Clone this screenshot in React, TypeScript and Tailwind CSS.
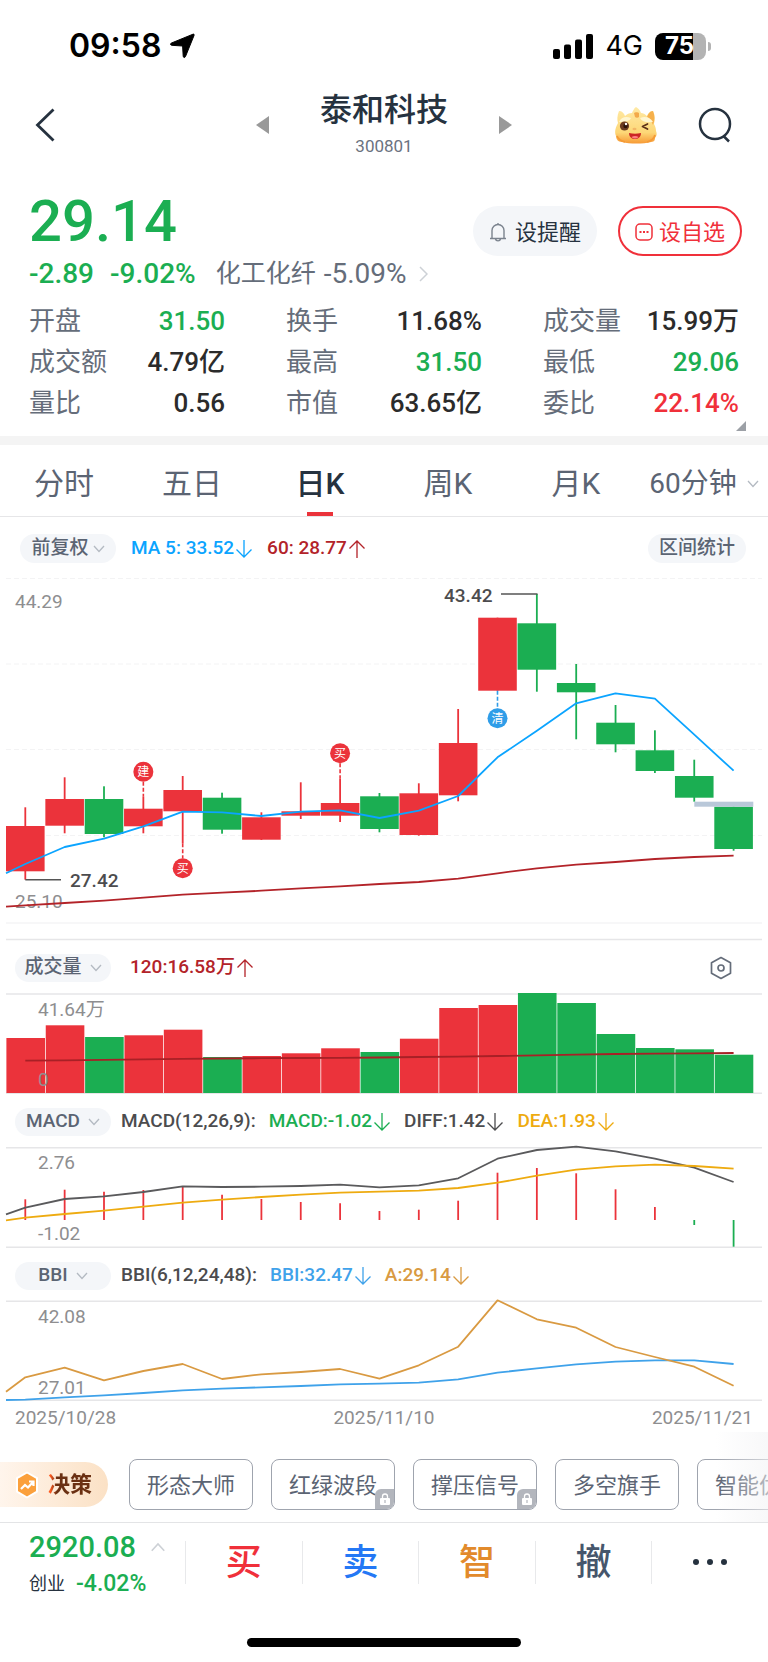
import type { ReactNode } from "react";

const RED = "#eb333b";
const GREEN = "#1bae52";
const STEP = 39.35;
const cx = (i: number) => 25.3 + i * STEP;

/* ---------- data ---------- */

const stats = [
  ["开盘", "31.50", "text-[#1bae52]"],
  ["换手", "11.68%", "text-[#2b2b2b]"],
  ["成交量", "15.99万", "text-[#2b2b2b]"],
  ["成交额", "4.79亿", "text-[#2b2b2b]"],
  ["最高", "31.50", "text-[#1bae52]"],
  ["最低", "29.06", "text-[#1bae52]"],
  ["量比", "0.56", "text-[#2b2b2b]"],
  ["市值", "63.65亿", "text-[#2b2b2b]"],
  ["委比", "22.14%", "text-[#f0303a]"],
];

const tabs = ["分时", "五日", "日K", "周K", "月K"];

// up?, body top, body bottom, high, low
const candles: [boolean, number, number, number, number][] = [
  [true, 826, 871.3, 807.3, 879.7],
  [true, 799, 825.7, 777.3, 833.3],
  [false, 799, 834, 786.3, 837.3],
  [true, 808.7, 826.3, 796.7, 833.3],
  [true, 790, 811.3, 776, 843.3],
  [false, 797.7, 829.7, 792.7, 833.7],
  [true, 817.3, 839.7, 812.3, 840],
  [true, 811.3, 815.7, 782.3, 819],
  [true, 803, 815.7, 778.3, 822],
  [false, 796.3, 829, 793, 832.3],
  [true, 793.3, 835, 783.3, 835.7],
  [true, 743, 795.3, 709, 801.3],
  [true, 617.7, 690.7, 617.7, 690.7],
  [false, 623.3, 669.7, 594, 691.7],
  [false, 683, 692.3, 664, 739.3],
  [false, 722.7, 744.3, 705, 752.3],
  [false, 750.3, 771, 730.3, 773],
  [false, 776, 797.7, 759.7, 801.7],
  [false, 806.7, 849, 806.7, 850.7],
];

const ma5 = [864, 847, 838.7, 826.3, 811.7, 812.3, 816, 811.7, 810.3, 818, 810.7, 796, 757.3, 730.7, 703.3, 693.3, 698.7, 734.7, 770.7];
const ma60 = [905.3, 903, 900.7, 897.7, 894.7, 892.7, 890.7, 888.3, 886.3, 884, 882, 878.7, 873.3, 868.3, 864.7, 862, 859, 857, 855.7];
const volumeTops = [1038, 1025.3, 1037, 1035.3, 1029.7, 1057, 1056, 1053.3, 1048.3, 1052, 1038.7, 1008, 1005, 993, 1003, 1034, 1048, 1049.3, 1054.7];
const volumeAvg = [1060.7, 1060.3, 1059.8, 1059.3, 1058.9, 1058.5, 1058.2, 1058, 1057.9, 1057.5, 1057, 1056.7, 1056, 1055.3, 1054.7, 1054, 1053.6, 1053.3, 1053];
const macdEnds = [1199.3, 1189.7, 1191.7, 1190, 1186.7, 1194.7, 1199, 1202, 1203.3, 1211, 1209.7, 1200.7, 1172.7, 1168, 1173.3, 1189.3, 1207, 1225, 1246.7];
const diff = [1207.7, 1199, 1196.3, 1192, 1186.3, 1187, 1186.7, 1186, 1184.7, 1187.3, 1185.3, 1178.3, 1158.7, 1150, 1146.7, 1151.3, 1158.7, 1167.7, 1182];
const dea = [1217.7, 1214, 1210.7, 1206.7, 1202.7, 1199.7, 1197, 1194.7, 1192.7, 1191.7, 1190.7, 1188, 1182.7, 1175.7, 1169.7, 1166.3, 1164.7, 1166, 1168.7];
const bbi = [1399.7, 1397.3, 1395.3, 1393, 1390.3, 1388.7, 1387.3, 1386, 1384.3, 1383.7, 1382.7, 1379.3, 1372.7, 1368.3, 1364.3, 1361.7, 1360.3, 1360.3, 1364];
const price = [1377.3, 1367.7, 1380.3, 1371, 1364, 1379, 1374.3, 1372, 1369, 1378.7, 1365.3, 1346.7, 1300.3, 1319.3, 1327.7, 1347, 1357, 1366.7, 1385.7];

/* ---------- chart helpers ---------- */

function Line({ data, start, color }: { data: number[]; start?: number; color: string }) {
  const pts = data.map((y, i) => `${cx(i).toFixed(1)},${y}`);
  if (start !== undefined) pts.unshift(`6,${start}`);
  return <polyline points={pts.join(" ")} fill="none" stroke={color} strokeWidth="1.8" strokeLinejoin="round" />;
}

function Chart({ top, height, label, children }: { top: number; height: number; label: string; children: ReactNode }) {
  return (
    <svg
      viewBox={`0 ${top} 768 ${height}`}
      className="block h-auto w-full overflow-visible"
      role="img"
      aria-label={label}
      fontFamily="Roboto, 'Noto Sans CJK SC', sans-serif"
      fontSize="19"
    >
      {children}
    </svg>
  );
}

function Rule({ y, color = "#e6e6e8" }: { y: number; color?: string }) {
  return <line x1="6" x2="762" y1={y} y2={y} stroke={color} strokeWidth="1.5" />;
}

function Badge({ i, y, from, to, text, color }: { i: number; y: number; from: number; to: number; text: string; color: string }) {
  return (
    <g>
      <line x1={cx(i)} x2={cx(i)} y1={from} y2={to} stroke={color} strokeWidth="1.6" strokeDasharray="4 2" />
      <circle cx={cx(i)} cy={y} r="10" fill={color} />
      <text x={cx(i)} y={y + 4.5} fontSize="12" textAnchor="middle" fill="#fff">
        {text}
      </text>
    </g>
  );
}

function CandleChart() {
  return (
    <Chart top={570} height={370} label="日K线图">
      {[578.5, 664, 749.5, 835.5].map((y) => (
        <line key={y} x1="6" x2="762" y1={y} y2={y} stroke="#f3f3f4" strokeWidth="1" strokeDasharray="5 3" />
      ))}
      <Rule y={923} color="#f5f5f6" />
      <Rule y={939.5} />
      {candles.map(([up, t, b, h, l], i) => (
        <g key={i} fill={up ? RED : GREEN}>
          <rect x={cx(i) - 0.9} y={h} width="1.8" height={l - h} />
          <rect x={cx(i) - 19.3} y={t} width="38.6" height={b - t} />
        </g>
      ))}
      <rect x="694.3" y="801.7" width="59" height="5" fill="#b9c8d9" />
      <Badge i={3} y={771.7} from={781.7} to={796.7} text="建" color={RED} />
      <Badge i={4} y={868.3} from={843.3} to={858.5} text="买" color={RED} />
      <Badge i={8} y={753.3} from={763.3} to={778.3} text="买" color={RED} />
      <Badge i={12} y={718.3} from={690.7} to={709} text="清" color="#2f9de8" />
      <Line data={ma5} start={873.3} color="#0ba4ff" />
      <text x="15" y="608" fill="#8e8e90">44.29</text>
      <text x="15" y="908" fill="#8e8e90">25.10</text>
      <Line data={ma60} start={906.7} color="#b32329" />
      <path d="M25.3 879.7H61" stroke="#555" strokeWidth="1.6" />
      <text x="70" y="887" fill="#4c4c4e" fontWeight="500">27.42</text>
      <path d="M501 594H537.5" stroke="#555" strokeWidth="1.6" />
      <text x="444" y="602" fill="#4c4c4e" fontWeight="500">43.42</text>
    </Chart>
  );
}

function VolumeChart() {
  return (
    <Chart top={993} height={101} label="成交量">
      <Rule y={994} />
      <Rule y={1093.3} />
      {volumeTops.map((y, i) => (
        <rect key={i} x={cx(i) - 18.9} y={y} width="38.6" height={1093 - y} fill={candles[i][0] ? RED : GREEN} />
      ))}
      <Line data={volumeAvg} color="#a82026" />
      <text x="38" y="1016" fill="#8e8e90">41.64万</text>
      <text x="38" y="1086" fill="#8e8e90">0</text>
    </Chart>
  );
}

function MacdChart() {
  return (
    <Chart top={1147} height={101} label="MACD">
      <Rule y={1147.7} />
      <Rule y={1247.3} />
      {macdEnds.map((y, i) => (
        <line key={i} x1={cx(i)} x2={cx(i)} y1="1220" y2={y} stroke={y < 1220 ? RED : GREEN} strokeWidth="1.8" />
      ))}
      <Line data={diff} start={1214.3} color="#5a5a5c" />
      <Line data={dea} start={1220.3} color="#eeab10" />
      <text x="38" y="1169" fill="#8e8e90">2.76</text>
      <text x="38" y="1240" fill="#8e8e90">-1.02</text>
    </Chart>
  );
}

function BbiChart() {
  return (
    <Chart top={1301} height={101} label="BBI">
      <Rule y={1301.3} />
      <Rule y={1400.3} />
      <text x="38" y="1322.5" fill="#8e8e90">42.08</text>
      <text x="38" y="1393.5" fill="#8e8e90">27.01</text>
      <Line data={bbi} start={1400} color="#3fa2ea" />
      <Line data={price} start={1391.7} color="#d99a42" />
    </Chart>
  );
}

/* ---------- small pieces ---------- */

function Arrow({ up }: { up?: boolean }) {
  return (
    <svg viewBox="0 0 18 18" className={up ? "h-[18px] w-[18px]" : "h-[18px] w-[18px] rotate-180"} fill="none" stroke="currentColor" strokeWidth="1.3" aria-hidden="true">
      <path d="M9 18V1M1.5 8.5L9 1l7.5 7.5" />
    </svg>
  );
}

function Chevron({ className }: { className: string }) {
  return (
    <svg viewBox="0 0 12 8" className={className} fill="none" stroke="currentColor" strokeWidth="1.3" aria-hidden="true">
      <path d="M1 1l5 5.5L11 1" />
    </svg>
  );
}

function Reading({ color, up, children }: { color: string; up?: boolean; children: ReactNode }) {
  return (
    <span className={`flex items-center gap-px ${color}`}>
      {children}
      <Arrow up={up} />
    </span>
  );
}

function PanelHead({ name, children }: { name: string; children: ReactNode }) {
  return (
    <div className="flex h-[53px] items-center pt-[2px] pr-[36px] pl-[15px] text-[19px] font-medium text-[#4c4c4e]">
      <button className="flex h-7 w-24 shrink-0 items-center justify-center gap-2 rounded-full bg-[#f4f6f9] text-[#5b6473]">
        {name}
        <Chevron className="h-2 w-3 text-[#b4bac2]" />
      </button>
      {children}
    </div>
  );
}

function Mascot() {
  return (
    <svg viewBox="0 0 44 40" className="h-10 w-11" aria-hidden="true">
      <defs>
        <linearGradient id="skin" x1="0" y1="0" x2="0" y2="1">
          <stop offset="0" stopColor="#ffeaa6" />
          <stop offset="0.7" stopColor="#fdd777" />
          <stop offset="1" stopColor="#f79a35" />
        </linearGradient>
      </defs>
      <path d="M5 6c-2 5-2 9-1 12-2 4-4 8-2 13 0 3 2 6 6 6 8 2 21 2 29 0 4 0 4-3 4-4 2-2 2-5 1-7 0-3-1-5-2-7 1-5 1-9-1-13-3 0-5 2-6 5-2-2-4-3-6-3-1-3-3-5-5-6-2 1-3 4-4 6-3 0-5 1-7 3C10 8 8 6 5 6z" fill="url(#skin)" />
      <path d="M39 6c-3 0-5 3-6 6 3 1 4 4 6 8 2-5 2-9 0-14z" fill="#f6b04c" />
      <path d="M20 8c1-1 4-1 5 0v4c-1 1-3 1-4 0z" fill="#f3a94a" />
      <path d="M5 17c2-5 7-6 12-4-1 3-6 4-12 4zM26 13c5-2 10-1 13 4-6 1-11 0-13-4z" fill="#fff6d0" />
      <circle cx="10.5" cy="21" r="4.6" fill="#6b3c20" />
      <circle cx="11.5" cy="21" r="2.2" fill="#2d1409" />
      <circle cx="12" cy="19" r="1.2" fill="#fff" />
      <path d="M33.5 19l-5 2.5 5 2.5" fill="none" stroke="#5c3018" strokeWidth="1.7" strokeLinecap="round" strokeLinejoin="round" />
      <ellipse cx="20.5" cy="24" rx="2" ry="1.2" fill="#f3b766" />
      <path d="M15 28c4 1 8 1 12 0 0 8-12 8-12 0z" fill="#cc2624" />
      <path d="M17.5 32c2-1.5 5-1.5 7 0-2 2-5 2-7 0z" fill="#ff8080" />
      <path d="M3 31c1 3 4 5 8 6M41 30c-1 4-4 6-8 7" fill="none" stroke="#f59a35" strokeWidth="1.8" />
    </svg>
  );
}

function StatusBar() {
  return (
    <div className="flex h-[88px] items-center justify-between pt-1 pr-[57px] pl-[69px] text-black">
      <div className="flex items-center gap-2 font-['Inter',sans-serif] text-[32px] font-semibold">
        09:58
        <svg viewBox="0 0 26 26" className="h-[26px] w-[26px]" aria-hidden="true">
          <path d="M24 1.2c.8-.3 1.400.3 1.100 1.100L16.500 23.500c-.6 1.500-2.200 1.200-2.300-.3L13.600 13 2.800 12.300c-1.500-.1-1.800-1.700-.3-2.300z" stroke="#000" strokeWidth="1" strokeLinejoin="round" />
        </svg>
      </div>
      <div className="flex items-center">
        <svg viewBox="0 0 40 25" className="h-[25px] w-10" aria-hidden="true">
          <rect x="0" y="15" width="7" height="10" rx="2" />
          <rect x="11" y="10.5" width="7" height="14.5" rx="2" />
          <rect x="22" y="5.5" width="7" height="19.5" rx="2" />
          <rect x="33" y="0" width="7" height="25" rx="2" />
        </svg>
        <span className="ml-3 font-['Inter',sans-serif] text-[27px]">4G</span>
        <div className="ml-3 flex h-[27px] w-[51px] items-center rounded-lg bg-linear-to-r from-black from-75% to-[#b3b3b3] to-75% pl-[10px] font-['Inter',sans-serif] text-2xl leading-none font-bold text-white">
          75
        </div>
        <div className="ml-[2px] h-[9px] w-[3px] rounded-r-full bg-[#b3b3b3]" />
      </div>
    </div>
  );
}

function Header() {
  return (
    <header className="grid h-[72px] grid-cols-[1fr_256px_1fr] items-center text-[#26323f]">
      <button aria-label="返回" className="ml-[35px] justify-self-start">
        <svg viewBox="0 0 20 34" className="h-[34px] w-5" fill="none" stroke="currentColor" strokeWidth="2.8" aria-hidden="true">
          <path d="M18.500 1.500L2.500 17l16 15.500" />
        </svg>
      </button>
      <div className="flex items-center justify-between">
        <button aria-label="上一只">
          <svg viewBox="0 0 13 18" className="h-[18px] w-[13px]" fill="#999" aria-hidden="true"><path d="M13 0v18L0 9z" /></svg>
        </button>
        <div className="pt-[2px] text-center">
          <h1 className="text-[32px] leading-10 font-medium">泰和科技</h1>
          <p className="text-[17px] leading-8 text-[#6b7280]">300801</p>
        </div>
        <button aria-label="下一只">
          <svg viewBox="0 0 13 18" className="h-[18px] w-[13px]" fill="#999" aria-hidden="true"><path d="M0 0v18l13-9z" /></svg>
        </button>
      </div>
      <div className="mr-[36px] flex items-center gap-10 justify-self-end">
        <button aria-label="智能助手"><Mascot /></button>
        <button aria-label="搜索">
          <svg viewBox="0 0 34 36" className="h-9 w-[34px]" fill="none" stroke="currentColor" strokeWidth="2.5" aria-hidden="true">
            <circle cx="17" cy="17" r="15" />
            <path d="M25.500 29l5.500 5.500" />
          </svg>
        </button>
      </div>
    </header>
  );
}

function Quote() {
  return (
    <section className="relative px-[29px] pt-[30px] pb-3">
      <div className="flex h-[66px] items-end justify-between">
        <p className="self-start text-[58px] leading-[62px] font-medium text-[#1bae52]">29.14</p>
        <div className="-mr-[3px] flex gap-[21px] text-[22px]">
          <button className="flex h-[50px] w-[124px] items-center justify-center gap-2 rounded-full bg-[#f4f6f9] pt-[2px] text-[#26323f]">
            <svg viewBox="0 0 18 20" className="h-5 w-[18px]" fill="none" stroke="#7b838e" strokeWidth="1.4" aria-hidden="true">
              <path d="M1 16.500h16M3 16.500V8.500a6 6 0 0 1 12 0v8M9 1v1.500M6.500 17c.5 2.500 4.500 2.500 5 0" />
            </svg>
            设提醒
          </button>
          <button className="flex h-[50px] w-[124px] items-center justify-center gap-[6px] rounded-full border-2 border-[#f0303a] pt-[2px] text-[#f0303a]">
            <svg viewBox="0 0 18 18" className="h-[18px] w-[18px]" fill="none" stroke="currentColor" strokeWidth="1.5" aria-hidden="true">
              <rect x="1" y="1" width="16" height="16" rx="4" />
              <path d="M4.500 9h2M8 9h2M11.500 9h2" strokeWidth="2" />
            </svg>
            设自选
          </button>
        </div>
      </div>
      <div className="flex h-[34px] items-center pt-[2px] text-[28px]">
        <span className="font-medium text-[#1bae52]">-2.89</span>
        <span className="ml-4 font-medium text-[#1bae52]">-9.02%</span>
        <a href="#industry" className="ml-5 flex items-center gap-2 text-[#656d7a]">
          <span className="text-[25px]">化工化纤</span>
          <span>-5.09%</span>
          <svg viewBox="0 0 9 16" className="ml-1 h-4 w-[9px]" fill="none" stroke="#cdd1d6" strokeWidth="1.5" aria-hidden="true"><path d="M1 1l7 7-7 7" /></svg>
        </a>
      </div>
      <dl className="grid grid-cols-3 gap-x-[61px] pt-[11px] text-[26px] leading-[41px]">
        {stats.map(([k, v, c]) => (
          <div key={k} className="flex justify-between whitespace-nowrap">
            <dt className="text-[#656d7a]">{k}</dt>
            <dd className={`font-medium ${c}`}>{v}</dd>
          </div>
        ))}
      </dl>
      <svg viewBox="0 0 10 10" className="absolute right-[22px] bottom-[5px] h-[10px] w-[10px]" fill="#9ca0a6" aria-hidden="true"><path d="M10 0v10H0z" /></svg>
    </section>
  );
}

function Tabs() {
  return (
    <nav className="grid h-[72px] grid-cols-6 border-b border-[#e6e6e8] text-[30px] text-[#5b6473]">
      {tabs.map((t) => (
        <button key={t} className={t === "日K" ? "relative pt-[6px] font-medium text-[#26323f]" : "pt-[6px]"}>
          {t}
          {t === "日K" && <span className="absolute inset-x-0 bottom-0 mx-auto h-1 w-[26px] bg-[#eb333b]" />}
        </button>
      ))}
      <button className="flex items-center justify-center gap-[10px] pt-[6px] text-[28px] whitespace-nowrap">
        60分钟
        <Chevron className="h-2 w-3 text-[#b4bac2]" />
      </button>
    </nav>
  );
}

const chips = [
  { name: "形态大师", locked: false },
  { name: "红绿波段", locked: true },
  { name: "撑压信号", locked: true },
  { name: "多空旗手", locked: false },
  { name: "智能优选", locked: false },
];

function Chips() {
  return (
    <div className="relative flex items-center overflow-hidden border-b border-[#e3e4e6] pt-[27px] pb-3">
      <button className="flex h-[45px] w-[108px] shrink-0 items-center gap-2 rounded-r-full bg-linear-to-r from-[#fff5ec] to-[#fbe1c5] pl-[14px] text-[22px] font-bold text-[#6b3012]">
        <svg viewBox="0 0 26 28" className="h-7 w-[26px] shrink-0" aria-hidden="true">
          <path d="M13 1.500l10 5.600v13.500L13 26.500 3 20.600V7.100z" fill="#fba03c" stroke="#fff" strokeWidth="2" strokeLinejoin="round" />
          <path d="M7 18l4-4 3 2.500 5-5.500M15 10.500h4.500V15" fill="none" stroke="#fff" strokeWidth="2.2" />
        </svg>
        <span className="bg-linear-to-r from-[#ff5a1f] from-5% to-[#6b3012] to-20% bg-clip-text text-transparent">决策</span>
      </button>
      <div className="ml-[21px] flex gap-[18px]">
        {chips.map((c) => (
          <button key={c.name} className="relative h-[51px] w-[124px] shrink-0 overflow-hidden rounded-lg border border-[#9fa4ae] pt-px text-[22px] text-[#5b6473]">
            {c.name}
            {c.locked && (
              <span className="absolute right-0 bottom-0 flex h-5 w-[19px] items-center justify-center rounded-tl-md bg-[#b3b6bd]">
                <svg viewBox="0 0 12 13" className="h-[13px] w-3" aria-hidden="true">
                  <rect x="1" y="5" width="10" height="7" rx="1" fill="#fff" />
                  <path d="M3.500 5.500V3.500a2.500 2.500 0 0 1 5 0v2" fill="none" stroke="#fff" strokeWidth="1.3" />
                  <path d="M6 7v3" stroke="#b3b6bd" strokeWidth="1.2" />
                </svg>
              </span>
            )}
          </button>
        ))}
      </div>
      <div className="pointer-events-none absolute inset-y-0 right-0 w-[52px] bg-linear-to-r from-[#f3f3f5]/0 to-[#f3f3f5]/60" />
    </div>
  );
}

const actions = [
  ["买", "text-[#f0303a]"],
  ["卖", "text-[#2478f5]"],
  ["智", "text-[#e28a2b]"],
  ["撤", "text-[#46566c]"],
];

function TradeBar() {
  return (
    <div className="flex h-[78px] items-center">
      <button className="w-[185px] shrink-0 pt-[5px] pl-[29px] text-left">
        <span className="flex items-center gap-[14px] text-[29px] leading-[38px] font-medium text-[#1bae52]">
          2920.08
          <Chevron className="h-[10px] w-4 rotate-180 text-[#cdd1d6]" />
        </span>
        <span className="flex items-center gap-[11px] text-lg leading-9 text-[#26323f]">
          创业 <span className="text-[23px] font-medium text-[#1bae52]">-4.02%</span>
        </span>
      </button>
      {actions.map(([t, c]) => (
        <button key={t} className={`h-[43px] flex-1 border-l border-[#e8e9eb] text-[36px] leading-[45px] font-medium ${c}`}>
          {t}
        </button>
      ))}
      <button aria-label="更多" className="flex h-[43px] flex-1 items-center justify-center gap-2 border-l border-[#e8e9eb]">
        <span className="h-[6px] w-[6px] rounded-full bg-[#26323f]" />
        <span className="h-[6px] w-[6px] rounded-full bg-[#26323f]" />
        <span className="h-[6px] w-[6px] rounded-full bg-[#26323f]" />
      </button>
    </div>
  );
}

export default function App() {
  return (
    <main className="w-full overflow-hidden bg-white pb-[15px] font-['Roboto','Noto_Sans_CJK_SC',sans-serif]">
      <StatusBar />
      <Header />
      <Quote />
      <div className="h-[9px] bg-[#f4f4f4]" />
      <Tabs />

      <div className="flex items-center pt-[17px] pr-[22px] pb-[7px] pl-5 text-[19px] font-medium">
        <button className="flex h-[29px] w-24 items-center justify-center gap-1 rounded-full bg-[#f4f6f9] text-[#5b6473]">
          前复权
          <Chevron className="h-2 w-3 text-[#b4bac2]" />
        </button>
        <div className="ml-[15px] flex gap-[14px]">
          <Reading color="text-[#0ba4ff]">MA 5: 33.52</Reading>
          <Reading color="text-[#b32329]" up>60: 28.77</Reading>
        </div>
        <button className="ml-auto h-[29px] w-[98px] rounded-full bg-[#f4f6f9] text-[#5b6473]">区间统计</button>
      </div>

      <CandleChart />
      <PanelHead name="成交量">
        <div className="ml-[19px]">
          <Reading color="text-[#b32329]" up>120:16.58万</Reading>
        </div>
        <button aria-label="指标设置" className="ml-auto text-[#656d7a]">
          <svg viewBox="0 0 22 24" className="h-6 w-[22px]" fill="none" stroke="currentColor" strokeWidth="1.7" aria-hidden="true">
            <path d="M11 1.500l9.500 5.200v10.600L11 22.500l-9.500-5.200V6.700z" strokeLinejoin="round" />
            <circle cx="11" cy="12" r="3" />
          </svg>
        </button>
      </PanelHead>
      <VolumeChart />
      <PanelHead name="MACD">
        <div className="ml-[10px] flex gap-[13px]">
          <span>MACD(12,26,9):</span>
          <Reading color="text-[#1bae52]">MACD:-1.02</Reading>
          <Reading color="text-[#4c4c4e]">DIFF:1.42</Reading>
          <Reading color="text-[#eeab10]">DEA:1.93</Reading>
        </div>
      </PanelHead>
      <MacdChart />
      <PanelHead name="BBI">
        <div className="ml-[10px] flex gap-[13px]">
          <span>BBI(6,12,24,48):</span>
          <Reading color="text-[#3fa2ea]">BBI:32.47</Reading>
          <Reading color="text-[#d99a42]">A:29.14</Reading>
        </div>
      </PanelHead>
      <BbiChart />
      <div className="flex h-[30px] items-center justify-between px-[15px] pt-[2px] text-[19px] text-[#8e8e90]">
        <span>2025/10/28</span>
        <span>2025/11/10</span>
        <span>2025/11/21</span>
      </div>

      <Chips />
      <TradeBar />
      <div className="mx-auto mt-[37px] h-[9px] w-[274px] rounded-full bg-black" />
    </main>
  );
}
